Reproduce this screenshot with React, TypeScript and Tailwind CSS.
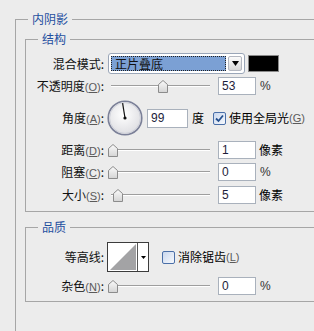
import React from "react"

function Mn({ k }: { k: string }) {
  return (
    <span className="font-['Liberation_Sans',sans-serif] text-[11px] text-[#5a5a5a]">
      (<span className="underline underline-offset-1">{k}</span>)
    </span>
  )
}

function Label({ text, k }: { text: string; k?: string }) {
  return (
    <div className="w-[78px] shrink-0 text-right leading-4 text-[#111]">
      {text}
      {k && <Mn k={k} />}:
    </div>
  )
}

function Slider({ pct }: { pct: number }) {
  // thumb travels across the track, 0..95px
  const left = Math.round(pct * 95)
  return (
    <div className="relative ml-[4px] h-[18px] w-[104px] shrink-0">
      <div className="absolute left-[3px] right-[2px] top-[8px] h-px bg-[#9e9e9e]" />
      <div className="absolute left-[3px] right-[2px] top-[9px] h-px bg-white" />
      <svg className="absolute top-[3px]" style={{ left }} width="10" height="13" viewBox="0 0 10 13">
        <defs>
          <linearGradient id="th" x1="0" y1="0" x2="0" y2="1">
            <stop offset="0" stopColor="#fbfbfb" />
            <stop offset="1" stopColor="#d4d4d4" />
          </linearGradient>
        </defs>
        <path d="M0.5 12.5 V4.5 L5 0.5 L9.5 4.5 V12.5 Z" fill="url(#th)" stroke="#8c8c8c" />
      </svg>
    </div>
  )
}

function Field({ v, w = "w-[38px]" }: { v: string; w?: string }) {
  return (
    <div className={`${w} h-[18px] shrink-0 border border-[#a9b1bc] bg-white pl-[3px] font-['Liberation_Sans',sans-serif] text-[12px] leading-[16px] text-[#1d1d3a]`}>
      {v}
    </div>
  )
}

function Check({ on }: { on?: boolean }) {
  return (
    <span className="inline-flex h-[13px] w-[13px] shrink-0 items-center justify-center rounded-[2px] border border-[#4a6fa8] bg-[linear-gradient(135deg,#c9d7ee,#f6f8fc)]">
      {on && (
        <svg width="9" height="9" viewBox="0 0 9 9">
          <path d="M1 4.5 L3.5 7 L8 1.5" fill="none" stroke="#24508f" strokeWidth="1.8" />
        </svg>
      )}
    </span>
  )
}

function Dial() {
  return (
    <svg width="36" height="36" viewBox="0 0 36 36" className="ml-[3px] shrink-0">
      <defs>
        <radialGradient id="dg" cx="0.45" cy="0.4" r="0.6">
          <stop offset="0" stopColor="#ffffff" />
          <stop offset="1" stopColor="#dedee2" />
        </radialGradient>
      </defs>
      <circle cx="18" cy="18" r="16.8" fill="url(#dg)" stroke="#7b8098" strokeWidth="1.6" />
      <circle cx="18" cy="18" r="15.4" fill="none" stroke="#c9cbd6" strokeWidth="0.8" />
      <line x1="18" y1="18" x2="15.6" y2="3.2" stroke="#111" strokeWidth="1.2" />
      <circle cx="18" cy="18" r="1.6" fill="#111" />
    </svg>
  )
}

function Group({ title, className, children }: { title: string; className: string; children: React.ReactNode }) {
  return (
    <fieldset className={`border border-[#a6a6a6] ${className}`}>
      <legend className="ml-[12px] px-1 leading-4 text-[#1f4f9f]">{title}</legend>
      {children}
    </fieldset>
  )
}

export default function App() {
  return (
    <div className="h-[331px] w-[314px] overflow-hidden bg-[#ececec] pl-[15px] pt-[11px] font-['Noto_Sans_CJK_SC',sans-serif] text-[12px]">
      <Group title="内阴影" className="h-[360px] w-[320px]">
        <div className="ml-[9px] mt-[4px] w-[320px]">
          <Group title="结构" className="pb-[7px]">
            {/* 混合模式 */}
            <div className="mt-[6px] flex h-[21px] items-center">
              <Label text="混合模式" />
              <div className="ml-[4px] flex h-[21px] w-[137px] shrink-0 items-center rounded-[3px] border border-[#9aa6b8] bg-white p-[2px]">
                <div className="h-full flex-1 border border-dotted border-[#222] bg-[#7ba0d4] pl-[3px] leading-[14px] text-[#111]">
                  正片叠底
                </div>
                <div className="ml-[2px] flex h-full w-[14px] items-center justify-center rounded-[2px] border border-[#b3b7c0] bg-[linear-gradient(#fbfbfb,#d6d6d6)]">
                  <svg width="7" height="5" viewBox="0 0 7 5">
                    <path d="M0 0 H7 L3.5 5 Z" fill="#000" />
                  </svg>
                </div>
              </div>
              <div className="ml-[3px] h-[17px] w-[31px] shrink-0 border border-[#8a8a8a] bg-black" />
            </div>

            {/* 不透明度 */}
            <div className="mt-[3px] flex h-[18px] items-center">
              <Label text="不透明度" k="O" />
              <Slider pct={0.53} />
              <div className="ml-[6px]"><Field v="53" /></div>
              <span className="ml-[4px] font-['Liberation_Sans',sans-serif] text-[#333]">%</span>
            </div>

            {/* 角度 */}
            <div className="mt-[5px] flex h-[36px] items-center">
              <Label text="角度" k="A" />
              <Dial />
              <div className="ml-[4px]"><Field v="99" w="w-[41px] h-[19px]" /></div>
              <span className="ml-[4px]">度</span>
              <div className="ml-[9px] flex items-center">
                <Check on />
                <span className="ml-[3px]">使用全局光</span>
                <Mn k="G" />
              </div>
            </div>

            {/* 距离 */}
            <div className="mt-[5px] flex h-[18px] items-center">
              <Label text="距离" k="D" />
              <Slider pct={0} />
              <div className="ml-[6px]"><Field v="1" /></div>
              <span className="ml-[3px]">像素</span>
            </div>

            {/* 阻塞 */}
            <div className="mt-[4px] flex h-[18px] items-center">
              <Label text="阻塞" k="C" />
              <Slider pct={0} />
              <div className="ml-[6px]"><Field v="0" /></div>
              <span className="ml-[4px] font-['Liberation_Sans',sans-serif] text-[#333]">%</span>
            </div>

            {/* 大小 */}
            <div className="mt-[5px] flex h-[18px] items-center">
              <Label text="大小" k="S" />
              <Slider pct={0.05} />
              <div className="ml-[6px]"><Field v="5" /></div>
              <span className="ml-[3px]">像素</span>
            </div>
          </Group>

          <Group title="品质" className="mt-[7px] pb-[6px]">
            {/* 等高线 */}
            <div className="mt-[7px] flex h-[30px] items-center">
              <Label text="等高线" />
              <div className="ml-[3px] flex h-[30px] w-[42px] shrink-0 border border-[#3c3c3c] bg-white">
                <svg width="29" height="28" viewBox="0 0 29 28">
                  <polygon points="2,27 28,1 28,27" fill="#a3a3a5" />
                </svg>
                <div className="flex flex-1 items-center justify-center border-l border-[#555]">
                  <svg width="5" height="3" viewBox="0 0 5 3">
                    <path d="M0 0 H5 L2.5 3 Z" fill="#000" />
                  </svg>
                </div>
              </div>
              <div className="ml-[13px] flex items-center">
                <Check />
                <span className="ml-[3px]">消除锯齿</span>
                <Mn k="L" />
              </div>
            </div>

            {/* 杂色 */}
            <div className="mt-[5px] flex h-[18px] items-center">
              <Label text="杂色" k="N" />
              <Slider pct={0} />
              <div className="ml-[6px]"><Field v="0" /></div>
              <span className="ml-[4px] font-['Liberation_Sans',sans-serif] text-[#333]">%</span>
            </div>
          </Group>
        </div>
      </Group>
    </div>
  )
}
